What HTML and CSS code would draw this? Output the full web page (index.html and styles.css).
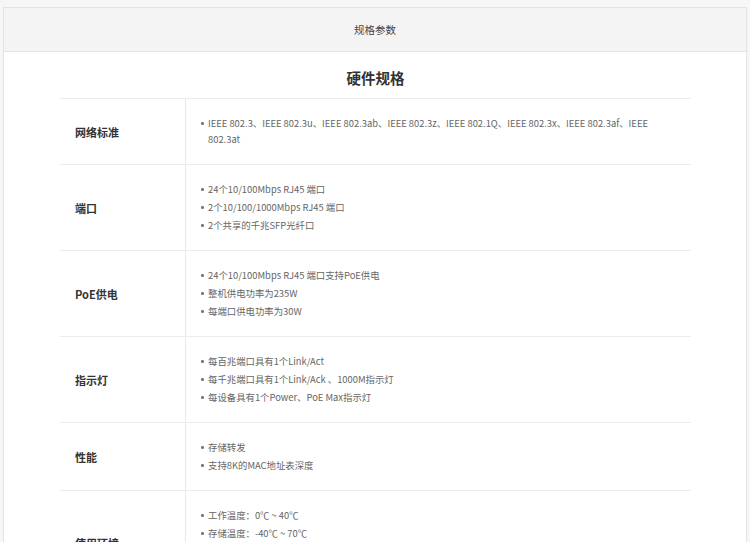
FILE: index.html
```html
<!DOCTYPE html>
<html lang="zh-CN">
<head>
<meta charset="utf-8">
<title>规格参数</title>
<link rel="stylesheet" href="styles.css">
</head>
<body>
<div class="page">
  <div class="box">
    <div class="tab-head">规格参数</div>
    <div class="content">
      <h2 class="title">硬件规格</h2>
      <div class="spec">
        <div class="row">
          <div class="label">网络标准</div>
          <ul class="values">
            <li>IEEE 802.3、IEEE 802.3u、IEEE 802.3ab、IEEE 802.3z、IEEE 802.1Q、IEEE 802.3x、IEEE 802.3af、IEEE 802.3at</li>
          </ul>
        </div>
        <div class="row">
          <div class="label">端口</div>
          <ul class="values">
            <li>24个10/100Mbps RJ45 端口</li>
            <li>2个10/100/1000Mbps RJ45 端口</li>
            <li>2个共享的千兆SFP光纤口</li>
          </ul>
        </div>
        <div class="row">
          <div class="label">PoE供电</div>
          <ul class="values">
            <li>24个10/100Mbps RJ45 端口支持PoE供电</li>
            <li>整机供电功率为235W</li>
            <li>每端口供电功率为30W</li>
          </ul>
        </div>
        <div class="row">
          <div class="label">指示灯</div>
          <ul class="values">
            <li>每百兆端口具有1个Link/Act</li>
            <li>每千兆端口具有1个Link/Ack 、1000M指示灯</li>
            <li>每设备具有1个Power、PoE Max指示灯</li>
          </ul>
        </div>
        <div class="row">
          <div class="label">性能</div>
          <ul class="values">
            <li>存储转发</li>
            <li>支持8K的MAC地址表深度</li>
          </ul>
        </div>
        <div class="row">
          <div class="label">使用环境</div>
          <ul class="values">
            <li>工作温度：0℃ ~ 40℃</li>
            <li>存储温度：-40℃ ~ 70℃</li>
            <li>工作湿度：10%~90%RH 不凝结</li>
            <li>存储湿度：5%~90%RH 不凝结</li>
          </ul>
        </div>
      </div>
    </div>
  </div>
</div>
</body>
</html>
```

FILE: styles.css
```css
html, body {
  margin: 0;
  padding: 0;
  background: #f6f6f6;
  font-family: "Noto Sans CJK SC", "Noto Sans", sans-serif;
}
.page {
  padding: 7px 3px 0 3px;
  height: 535px;
  overflow: hidden;
}
.box {
  border: 1px solid #e4e4e4;
  border-bottom: none;
  background: #fff;
  width: 742px;
}
.tab-head {
  height: 43px;
  line-height: 43px;
  background: #f4f4f4;
  border-bottom: 1px solid #e4e4e4;
  text-align: center;
  font-size: 10.5px;
  color: #444;
}
.content {
  padding: 0 55px 0 56px;
}
.title {
  margin: 0;
  padding: 14px 0 8px;
  line-height: 24px;
  text-align: center;
  font-size: 14.5px;
  font-weight: 700;
  color: #333;
}
.spec {
  border-top: 1.5px solid #ececec;
  width: 631px;
}
.row {
  display: flex;
  border-bottom: 1.5px solid #ececec;
}
.label {
  width: 110px;
  flex: none;
  padding-left: 15px;
  border-right: 1px solid #e8e8e8;
  display: flex;
  align-items: center;
  font-size: 11px;
  font-weight: 700;
  color: #333;
}
.values {
  list-style: none;
  margin: 0;
  padding: 16px 30px 15px 15px;
  font-size: 9.4px;
  line-height: 16px;
  color: #666;
  flex: 1;
}
.values li {
  position: relative;
  padding-left: 7px;
  margin-bottom: 2px;
}
.values li::before {
  content: "";
  position: absolute;
  left: 0;
  top: 7px;
  width: 2.5px;
  height: 2.5px;
  border-radius: 50%;
  background: #777;
}
```
